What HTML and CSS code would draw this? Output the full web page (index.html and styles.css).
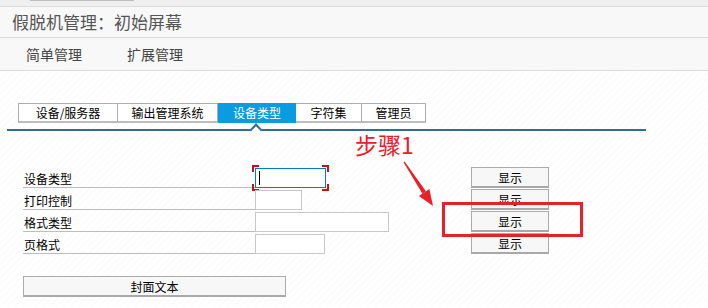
FILE: index.html
```html
<!DOCTYPE html>
<html lang="zh">
<head>
<meta charset="UTF-8" />
<title>假脱机管理：初始屏幕</title>
<link rel="stylesheet" href="styles.css">
</head>
<body>
<div class="topbar"><span class="scroll"></span></div>
<div class="title">假脱机管理：初始屏幕</div>
<div class="menu">
<span>简单管理</span>
<span>扩展管理</span>
</div>

<div class="content">
<div class="tabstrip">
<div class="tabs">
<div class="tab first" style="width:100px">设备/服务器</div>
<div class="tab" style="width:100px">输出管理系统</div>
<div class="tab active" style="width:78px">设备类型</div>
<div class="tab" style="width:66px">字符集</div>
<div class="tab" style="width:64px">管理员</div>
</div>
<span class="notch"></span>
</div>

<div class="form">
<div class="label">设备类型</div>
<div class="cell">
<div class="field focused" style="width:71px"><span class="caret"></span></div>
<span class="corner tl"></span><span class="corner tr"></span>
<span class="corner bl"></span><span class="corner br"></span>
</div>
<div class="cell"><button class="show">显示</button></div>

<div class="label">打印控制</div>
<div class="cell"><div class="field" style="width:47px"></div></div>
<div class="cell"><button class="show">显示</button></div>

<div class="label">格式类型</div>
<div class="cell"><div class="field" style="width:134px"></div></div>
<div class="cell"><button class="show">显示</button></div>

<div class="label">页格式</div>
<div class="cell"><div class="field" style="width:70px"></div></div>
<div class="cell"><button class="show">显示</button></div>
</div>

<button class="cover">封面文本</button>
</div>

<!-- annotation drawn over the screenshot -->
<div class="step">步骤1</div>
<svg class="arrow" width="50" height="60" viewBox="0 0 50 60">
<polygon points="8.5,7.3 9.6,6.6 30.9,36.3 27.4,38.8" fill="#e8202a"/>
<polygon points="38,51 34.4,33.9 23.9,41" fill="#e8202a"/>
</svg>
<div class="mark"></div>
</body>
</html>
```

FILE: styles.css
```css
body {
margin: 0;
width: 708px;
height: 308px;
position: relative;
overflow: hidden;
font-family: "Noto Sans CJK SC", "Noto Sans", sans-serif;
background: #fff;
}

.topbar {
height: 6px;
background: #efefef;
border-bottom: 1px solid #dcdcdc;
}

.scroll {
display: block;
margin-left: 30px;
width: 104px;
height: 1px;
background: #bdbdbd;
}

.title {
height: 30px;
line-height: 30px;
padding-left: 12px;
font-size: 17px;
color: #555;
background: #f8f8f8;
border-bottom: 1px solid #dcdcdc;
}

.menu {
height: 32px;
line-height: 32px;
padding-left: 26px;
display: flex;
gap: 45px;
font-size: 14px;
color: #444;
background: #f8f8f8;
border-bottom: 1px solid #dcdcdc;
}

.content {
padding-top: 32px;
height: 236px;
box-sizing: border-box;
background: repeating-linear-gradient(-45deg, rgba(120, 140, 160, 0.025) 0 2px, transparent 2px 5px);
}

.tabstrip {
position: relative;
margin-left: 7px;
width: 639px;
padding-bottom: 6px;
border-bottom: 2px solid #336b9a;
}

.tabs {
display: flex;
margin-left: 11px;
}

.tab {
height: 20px;
box-sizing: border-box;
border-top: 1px solid #adadad;
border-right: 1px solid #adadad;
border-bottom: 2px solid #bdbdbd;
background: #fff;
font-size: 12px;
line-height: 17px;
text-align: center;
color: #000;
}

.tab.first {
border-left: 1px solid #adadad;
}

.tab.active {
border: none;
background: #0b9be0;
color: #fff;
line-height: 19px;
}

.notch {
position: absolute;
left: 245px;
bottom: -4px;
width: 6px;
height: 6px;
background: #fff;
border-top: 2px solid #336b9a;
border-left: 2px solid #336b9a;
transform: rotate(45deg);
}

.form {
margin-top: 35px;
margin-left: 23px;
display: grid;
grid-template-columns: 232px 216px 78px;
grid-auto-rows: 22px;
}

.label {
border-bottom: 1px solid #bdbdbd;
font-size: 12px;
line-height: 16px;
padding-left: 1px;
display: flex;
align-items: flex-end;
color: #000;
}

.cell {
position: relative;
}

.field {
margin-top: 2px;
height: 20px;
box-sizing: border-box;
border: 1px solid #c8c8c8;
background: #fff;
}

.field.focused {
border-color: #0a7abf;
position: relative;
}

.caret {
position: absolute;
left: 3px;
top: 2px;
width: 1px;
height: 14px;
background: #000;
}

.corner {
position: absolute;
width: 5px;
height: 5px;
border: 0 solid #c0121b;
}

.corner.tl { left: -3px; top: -1px; border-top-width: 2px; border-left-width: 2px; }
.corner.tr { left: 67px; top: -1px; border-top-width: 2px; border-right-width: 2px; }
.corner.bl { left: -3px; top: 18px; border-bottom-width: 2px; border-left-width: 2px; }
.corner.br { left: 67px; top: 18px; border-bottom-width: 2px; border-right-width: 2px; }

.show, .cover {
display: block;
padding: 0;
margin: 1px 0 0;
height: 21px;
box-sizing: border-box;
background: #f7f7f7;
border: 1px solid #ababab;
border-bottom: 2px solid #a9a9a9;
font-family: "Noto Sans CJK SC", "Noto Sans", sans-serif;
font-size: 12px;
color: #000;
}

.show {
width: 78px;
}

.cover {
margin: 22px 0 0 23px;
width: 263px;
}

.step {
position: absolute;
left: 355px;
top: 129px;
font-size: 23px;
line-height: 30px;
color: #e8202a;
}

.arrow {
position: absolute;
left: 395px;
top: 155px;
}

.mark {
position: absolute;
left: 442px;
top: 202px;
width: 141px;
height: 35px;
box-sizing: border-box;
border: 3px solid #e8202a;
}
```
